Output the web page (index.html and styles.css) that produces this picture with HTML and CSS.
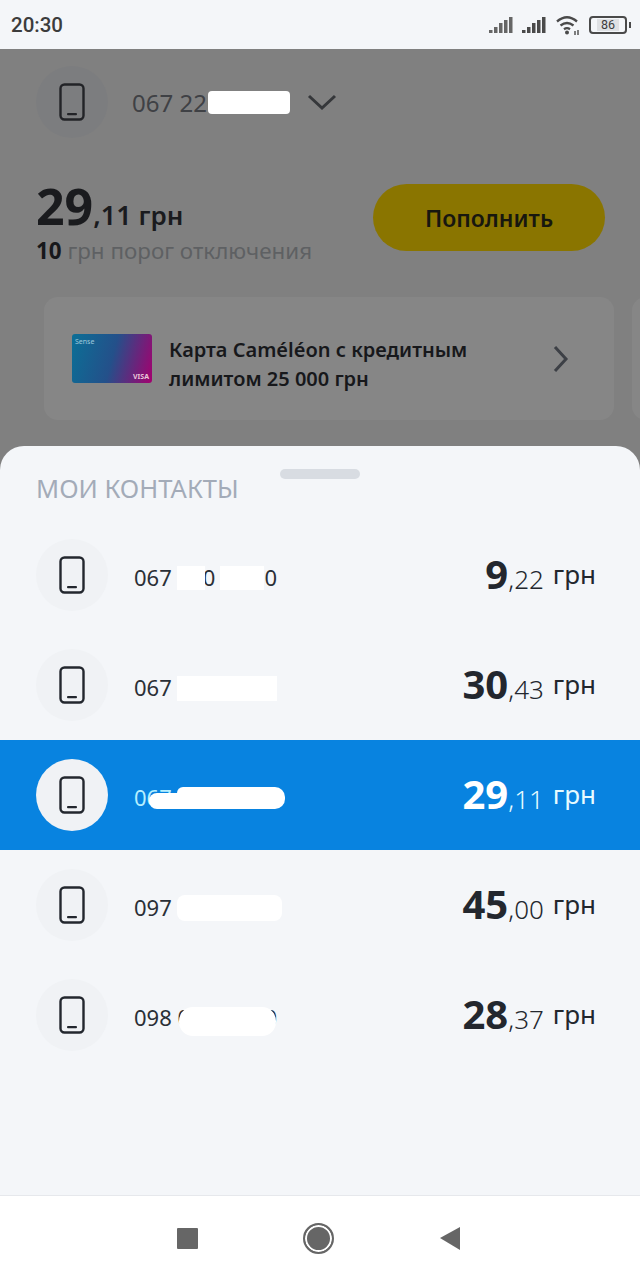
FILE: index.html
```html
<!DOCTYPE html>
<html lang="ru">
<head>
  <meta charset="UTF-8" />
  <meta name="viewport" content="width=device-width, initial-scale=1.0" />
  <title>Мои контакты</title>
  <link rel="stylesheet" href="styles.css">
</head>
<body>

  <svg class="sprite" width="0" height="0">
    <symbol id="phone" viewBox="0 0 26 38">
      <rect x="1.5" y="1.5" width="23" height="35" rx="4" fill="none" stroke="currentColor" stroke-width="2.4" />
      <rect x="8" y="30" width="10" height="2.2" rx="1" fill="currentColor" />
    </symbol>
    <symbol id="signal" viewBox="0 0 24 18">
      <rect x="0" y="14" width="3.500" height="3" />
      <rect x="5" y="11" width="3.500" height="6" />
      <rect x="10" y="7" width="3.500" height="10" />
      <rect x="15" y="4" width="3.500" height="13" />
      <rect x="20" y="1" width="3.500" height="16" />
    </symbol>
  </svg>

  <div class="page">

    <header class="status-bar">
      <span class="time">20:30</span>
      <div class="status-icons">
        <svg class="signal signal-weak" width="24" height="18"><use href="#signal" /></svg>
        <svg class="signal" width="24" height="18"><use href="#signal" /></svg>
        <svg class="wifi" width="26" height="22" viewBox="0 0 26 22" fill="none" stroke="currentColor" stroke-width="2.3">
          <path d="M2 7.5C8.500 2 15.500 2 22 7.500" />
          <path d="M5.500 11.500C10 8 14 8 18.500 11.500" />
          <path d="M9 15.200C11 13.800 13 13.800 15 15.200" />
          <circle cx="12" cy="18.500" r="2" fill="currentColor" stroke="none" />
          <path d="M20 17v4M23 16v5" stroke-width="1.400" />
        </svg>
        <div class="battery"><span class="battery-level">86</span></div>
        <span class="battery-nub"></span>
      </div>
    </header>

    <section class="account">
      <div class="account-head">
        <div class="icon-circle icon-circle-dim">
          <svg width="26" height="38"><use href="#phone" /></svg>
        </div>
        <span class="account-number">067 220 00 00</span>
        <span class="blob blob-account"></span>
        <svg class="chevron-down" width="30" height="17" viewBox="0 0 30 17" fill="none" stroke="currentColor" stroke-width="3">
          <path d="M2 2l13 12L28 2" />
        </svg>
      </div>

      <div class="balance-row">
        <div>
          <div class="balance"><b>29</b><span class="balance-cents">,11</span> <span class="balance-unit">грн</span></div>
          <div class="threshold"><b>10</b> грн порог отключения</div>
        </div>
        <button class="topup">Пополнить</button>
      </div>

      <div class="promo-strip">
        <div class="promo">
          <div class="bank-card">
            <span class="bank-card-name">Sense</span>
            <span class="bank-card-visa">VISA</span>
          </div>
          <p class="promo-text">Карта Caméléon с кредитным<br>лимитом 25 000 грн</p>
          <svg class="chevron-right" width="18" height="28" viewBox="0 0 18 28" fill="none" stroke="currentColor" stroke-width="3">
            <path d="M3 2l11 12L3 26" />
          </svg>
        </div>
        <div class="promo"></div>
      </div>
    </section>

    <section class="sheet">
      <div class="sheet-handle"></div>
      <h2 class="sheet-title">МОИ КОНТАКТЫ</h2>

      <ul class="contacts">
        <li class="contact">
          <div class="icon-circle"><svg width="26" height="38"><use href="#phone" /></svg></div>
          <span class="contact-number">067 000 00 00</span>
          <span class="blob blob-1a"></span>
          <span class="blob blob-1b"></span>
          <div class="amount"><b>9</b><span class="cents">,22</span><span class="unit">грн</span></div>
        </li>
        <li class="contact">
          <div class="icon-circle"><svg width="26" height="38"><use href="#phone" /></svg></div>
          <span class="contact-number">067 000 00 00</span>
          <span class="blob blob-2"></span>
          <div class="amount"><b>30</b><span class="cents">,43</span><span class="unit">грн</span></div>
        </li>
        <li class="contact contact-active">
          <div class="icon-circle"><svg width="26" height="38"><use href="#phone" /></svg></div>
          <span class="contact-number">067 000 00 00</span>
          <span class="blob blob-3a"></span>
          <span class="blob blob-3b"></span>
          <div class="amount"><b>29</b><span class="cents">,11</span><span class="unit">грн</span></div>
        </li>
        <li class="contact">
          <div class="icon-circle"><svg width="26" height="38"><use href="#phone" /></svg></div>
          <span class="contact-number">097 000 00 00</span>
          <span class="blob blob-4"></span>
          <div class="amount"><b>45</b><span class="cents">,00</span><span class="unit">грн</span></div>
        </li>
        <li class="contact">
          <div class="icon-circle"><svg width="26" height="38"><use href="#phone" /></svg></div>
          <span class="contact-number">098 000 00 00</span>
          <span class="blob blob-5"></span>
          <div class="amount"><b>28</b><span class="cents">,37</span><span class="unit">грн</span></div>
        </li>
      </ul>
    </section>

    <nav class="nav-bar">
      <span class="nav-square"></span>
      <span class="nav-home"></span>
      <svg width="22" height="24" viewBox="0 0 22 24"><path d="M1 12L21 1v23z" fill="#666" /></svg>
    </nav>

  </div>

</body>
</html>
```

FILE: styles.css
```css
* {
  box-sizing: border-box;
}

body {
  margin: 0;
  background: #808080;
  font-family: 'Noto Sans', sans-serif;
  color: #23272e;
}

.sprite {
  position: absolute;
}

.page {
  display: flex;
  flex-direction: column;
  width: 640px;
  height: 1280px;
  overflow: hidden;
}

/* status bar */

.status-bar {
  display: flex;
  align-items: center;
  justify-content: space-between;
  height: 49px;
  padding: 0 9px 0 11px;
  background: #f4f6f9;
}

.time {
  font-family: 'Roboto', sans-serif;
  font-size: 20.500px;
  font-weight: 500;
  color: #3c3c3c;
}

.status-icons {
  display: flex;
  align-items: center;
  color: #4a4a4a;
}

.signal {
  fill: #4a4a4a;
  margin-right: 9px;
}

.signal-weak {
  fill: #666;
}

.wifi {
  margin-right: 8px;
}

.battery {
  display: flex;
  align-items: center;
  justify-content: center;
  width: 38px;
  height: 18px;
  border: 2px solid #4a4a4a;
  border-radius: 4px;
}

.battery-level {
  font-family: 'Roboto', sans-serif;
  font-size: 12.500px;
  line-height: 12px;
  padding: 0 4px;
  background: #dfe1e4;
  color: #3c3c3c;
}

.battery-nub {
  width: 2px;
  height: 6px;
  margin-left: 2px;
  background: #4a4a4a;
}

/* dimmed account part */

.account {
  flex: 0 0 397px;
  color: #1a1b1e;
}

.account-head {
  position: relative;
  display: flex;
  align-items: center;
  padding: 17px 36px 0;
}

.icon-circle {
  display: flex;
  align-items: center;
  justify-content: center;
  flex: 0 0 72px;
  height: 72px;
  border-radius: 50%;
  background: #f0f2f5;
  color: #23272e;
}

.icon-circle-dim {
  background: #7c7d7f;
  color: #222327;
}

.account-number {
  width: 175px;
  margin-left: 24px;
  font-size: 24px;
  color: #3f4145;
  white-space: nowrap;
  overflow: hidden;
}

.chevron-down {
  color: #35373a;
}

.balance-row {
  display: flex;
  align-items: flex-start;
  justify-content: space-between;
  padding: 46px 35px 0 36px;
}

.balance {
  font-size: 26px;
  font-weight: 600;
  line-height: 44px;
  white-space: nowrap;
}

.balance b {
  font-size: 50px;
  font-weight: 700;
}

.balance-cents {
  font-size: 27px;
}

.balance-unit {
  font-size: 26px;
}

.threshold {
  font-size: 22.400px;
  line-height: 28px;
  color: #5e6063;
}

.threshold b {
  color: #17181b;
}

.topup {
  width: 232px;
  height: 67px;
  border: 0;
  border-radius: 34px;
  background: #8a7500;
  font-family: inherit;
  font-size: 23px;
  font-weight: 600;
  color: #17170f;
}

.promo-strip {
  display: flex;
  gap: 18px;
  padding: 32px 0 0 44px;
}

.promo {
  display: flex;
  flex: 0 0 570px;
  align-items: center;
  height: 123px;
  padding: 0 44px 0 28px;
  border-radius: 14px;
  background: #868686;
}

.bank-card {
  position: relative;
  flex: 0 0 80px;
  height: 49px;
  border-radius: 3px;
  background: linear-gradient(105deg, #0b6f96 0%, #24508a 50%, #a4006f 100%);
  color: #9fc9dc;
}

.bank-card-name {
  position: absolute;
  top: 3px;
  left: 3px;
  font-size: 7px;
}

.bank-card-visa {
  position: absolute;
  right: 3px;
  bottom: 2px;
  font-size: 7px;
  font-weight: 700;
  color: #e7c5d8;
}

.promo-text {
  flex: 1;
  margin: 10px 0 0 17px;
  font-size: 20px;
  font-weight: 600;
  line-height: 29px;
  color: #17181b;
}

.chevron-right {
  color: #3d4046;
}

/* bottom sheet */

.sheet {
  position: relative;
  flex: 1;
  border-radius: 24px 24px 0 0;
  background: #f4f6f9;
}

.sheet-handle {
  position: absolute;
  top: 23px;
  left: 280px;
  width: 80px;
  height: 10px;
  border-radius: 5px;
  background: #d8dce2;
}

.sheet-title {
  margin: 0;
  padding: 27px 36px 0;
  font-size: 25.500px;
  font-weight: 400;
  line-height: 30px;
  color: #a3abb8;
}

.contacts {
  margin: 17px 0 0;
  padding: 0;
  list-style: none;
}

.contact {
  position: relative;
  display: flex;
  align-items: center;
  height: 110px;
  padding: 0 44px 0 36px;
}

.contact-number {
  margin: 3px 0 0 26px;
  font-size: 22px;
  color: #2a2f36;
  white-space: nowrap;
}

.amount {
  margin: 0 0 3px auto;
  font-size: 26px;
  white-space: nowrap;
}

.amount b {
  font-size: 40px;
  font-weight: 700;
}

.cents {
  font-weight: 300;
}

.unit {
  margin-left: 9px;
  font-size: 26px;
  vertical-align: 5px;
}

.contact-active {
  background: #0883e0;
}

.contact-active .contact-number {
  color: #b5efff;
}

.contact-active .amount {
  color: #e6fbff;
}

.contact-active .amount b {
  color: #fff;
}

/* white smears that hide the numbers */

.blob {
  position: absolute;
  background: #fff;
}

.blob-account {
  top: 42px;
  left: 208px;
  width: 82px;
  height: 23px;
  border-radius: 4px;
}

.blob-1a {
  top: 46px;
  left: 177px;
  width: 28px;
  height: 24px;
}

.blob-1b {
  top: 46px;
  left: 220px;
  width: 44px;
  height: 24px;
}

.blob-2 {
  top: 46px;
  left: 177px;
  width: 100px;
  height: 25px;
}

.blob-3a {
  top: 53px;
  left: 149px;
  width: 60px;
  height: 16px;
  border-radius: 8px;
}

.blob-3b {
  top: 47px;
  left: 177px;
  width: 108px;
  height: 22px;
  border-radius: 6px 10px 10px 6px;
}

.blob-4 {
  top: 45px;
  left: 177px;
  width: 105px;
  height: 26px;
  border-radius: 8px;
}

.blob-5 {
  top: 47px;
  left: 179px;
  width: 97px;
  height: 29px;
  border-radius: 14px;
}

/* android nav */

.nav-bar {
  display: flex;
  flex: 0 0 85px;
  align-items: center;
  justify-content: space-between;
  padding: 0 179px 0 177px;
  border-top: 1px solid #e6e8ec;
  background: #fff;
}

.nav-square {
  width: 21px;
  height: 21px;
  border-radius: 1px;
  background: #666;
}

.nav-home {
  width: 31px;
  height: 31px;
  border: 2px solid #666;
  border-radius: 50%;
  background: #666;
  box-shadow: inset 0 0 0 2px #fff;
}
```
